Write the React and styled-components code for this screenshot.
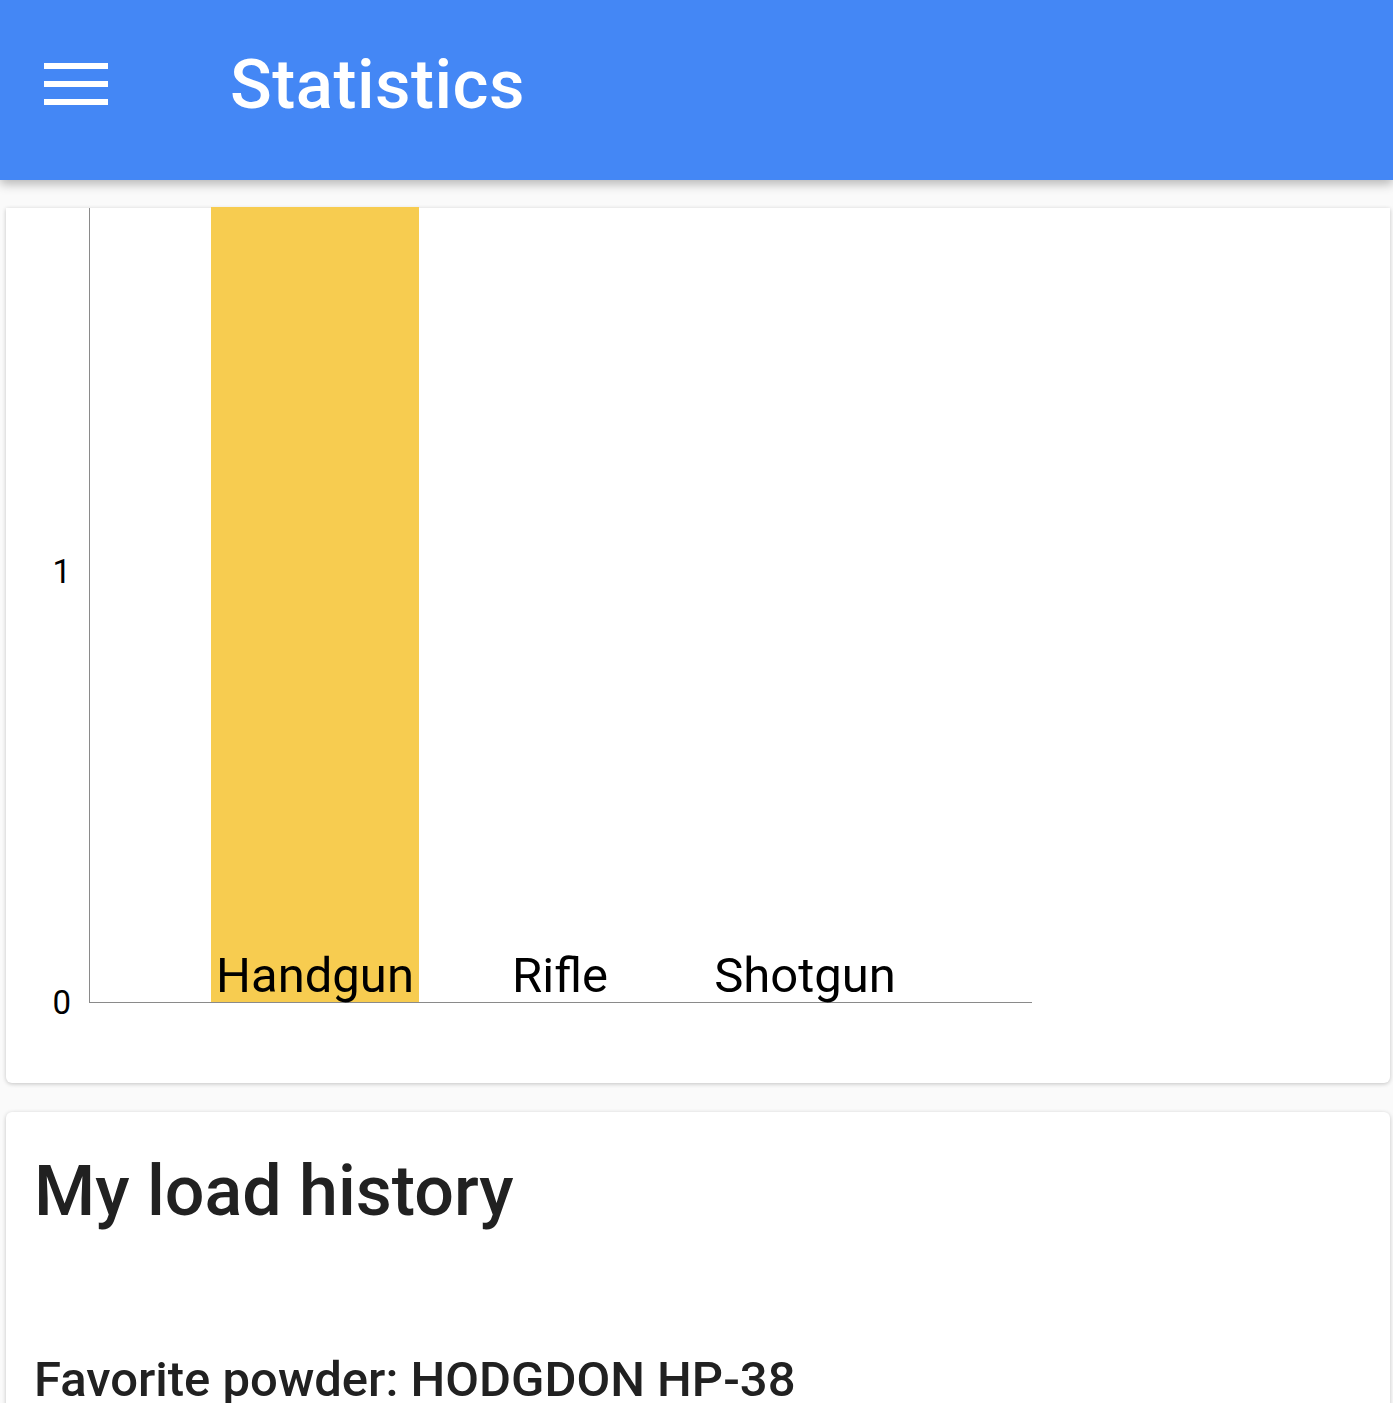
import React from 'react';
import styled, { createGlobalStyle } from 'styled-components';

const GlobalStyle = createGlobalStyle`
  html, body {
    margin: 0;
    padding: 0;
    background: #fafafa;
    font-family: Roboto, 'Liberation Sans', sans-serif;
    overflow: hidden;
  }
`

const Page = styled.div`
  display: flex;
  flex-direction: column;
  height: 1403px;
  overflow: hidden;
`

const Header = styled.header`
  position: relative;
  z-index: 2;
  flex: 0 0 180px;
  box-sizing: border-box;
  padding-bottom: 12px;
  display: flex;
  align-items: center;
  background: #4487f5;
  box-shadow: 0 4px 10px rgba(0, 0, 0, 0.28);
  color: #fff;
`

const MenuButton = styled.button`
  display: flex;
  flex-direction: column;
  justify-content: space-between;
  width: 64px;
  height: 42px;
  margin: 0 0 0 44px;
  padding: 0;
  border: none;
  background: none;
  span {
    display: block;
    height: 6px;
    background: #fff;
  }
`

const Title = styled.h1`
  margin: 0 0 0 122px;
  font-size: 69px;
  font-weight: 500;
  letter-spacing: 0.5px;
`

const Content = styled.main`
  flex: 1;
  display: flex;
  flex-direction: column;
  gap: 29px;
  padding: 28px 3px 0 6px;
  overflow: hidden;
`

const Card = styled.section`
  flex: 0 0 auto;
  background: #fff;
  border-radius: ${p => (p.cut ? '0 0 6px 6px' : '6px')};
  box-shadow: 0 1px 4px rgba(0, 0, 0, 0.22);
`

const ChartWrap = styled.div`
  display: flex;
  padding: 0 0 80px 0;
`

const YAxis = styled.div`
  position: relative;
  width: 83px;
  height: 795px;
`

const Tick = styled.span`
  position: absolute;
  right: 18px;
  font-size: 33px;
  line-height: 34px;
  color: #000;
`

const Plot = styled.div`
  display: flex;
  gap: 37px;
  width: 943px;
  height: 795px;
  padding-left: 121px;
  box-sizing: border-box;
  border-left: 1px solid #8a8a8a;
  border-bottom: 1px solid #8a8a8a;
`

const Column = styled.div`
  position: relative;
  width: 208px;
  height: 100%;
  display: flex;
  align-items: flex-end;
  justify-content: center;
`

const Bar = styled.div`
  position: absolute;
  left: 0;
  right: 0;
  bottom: 0;
  background: #f7cc50;
`

const Label = styled.span`
  position: relative;
  font-size: 49px;
  line-height: 1;
  padding-bottom: 2px;
  color: #000;
  white-space: nowrap;
`

const CardTitle = styled.h2`
  margin: 0;
  padding: 38px 28px 0;
  font-size: 70px;
  font-weight: 500;
  color: #212121;
`

const Stat = styled.p`
  margin: 0;
  padding: 119px 28px 40px;
  font-size: 49px;
  font-weight: 500;
  color: #212121;
`

const PX_PER_UNIT = 431;
const data = [
  { name: 'Handgun', value: 2 },
  { name: 'Rifle', value: 0 },
  { name: 'Shotgun', value: 0 },
];

export default function App() {
  return (
    <Page>
      <GlobalStyle />
      <Header>
        <MenuButton aria-label="menu">
          <span /><span /><span />
        </MenuButton>
        <Title>Statistics</Title>
      </Header>
      <Content>
        <Card cut>
          <ChartWrap>
            <YAxis>
              {[0, 1].map(v => (
                <Tick key={v} style={{ bottom: v * PX_PER_UNIT - 17 }}>{v}</Tick>
              ))}
            </YAxis>
            <Plot>
              {data.map(d => (
                <Column key={d.name}>
                  {d.value > 0 && <Bar style={{ height: Math.min(795, d.value * PX_PER_UNIT) }} />}
                  <Label>{d.name}</Label>
                </Column>
              ))}
            </Plot>
          </ChartWrap>
        </Card>
        <Card>
          <CardTitle>My load history</CardTitle>
          <Stat>Favorite powder: HODGDON HP-38</Stat>
        </Card>
      </Content>
    </Page>
  );
}
